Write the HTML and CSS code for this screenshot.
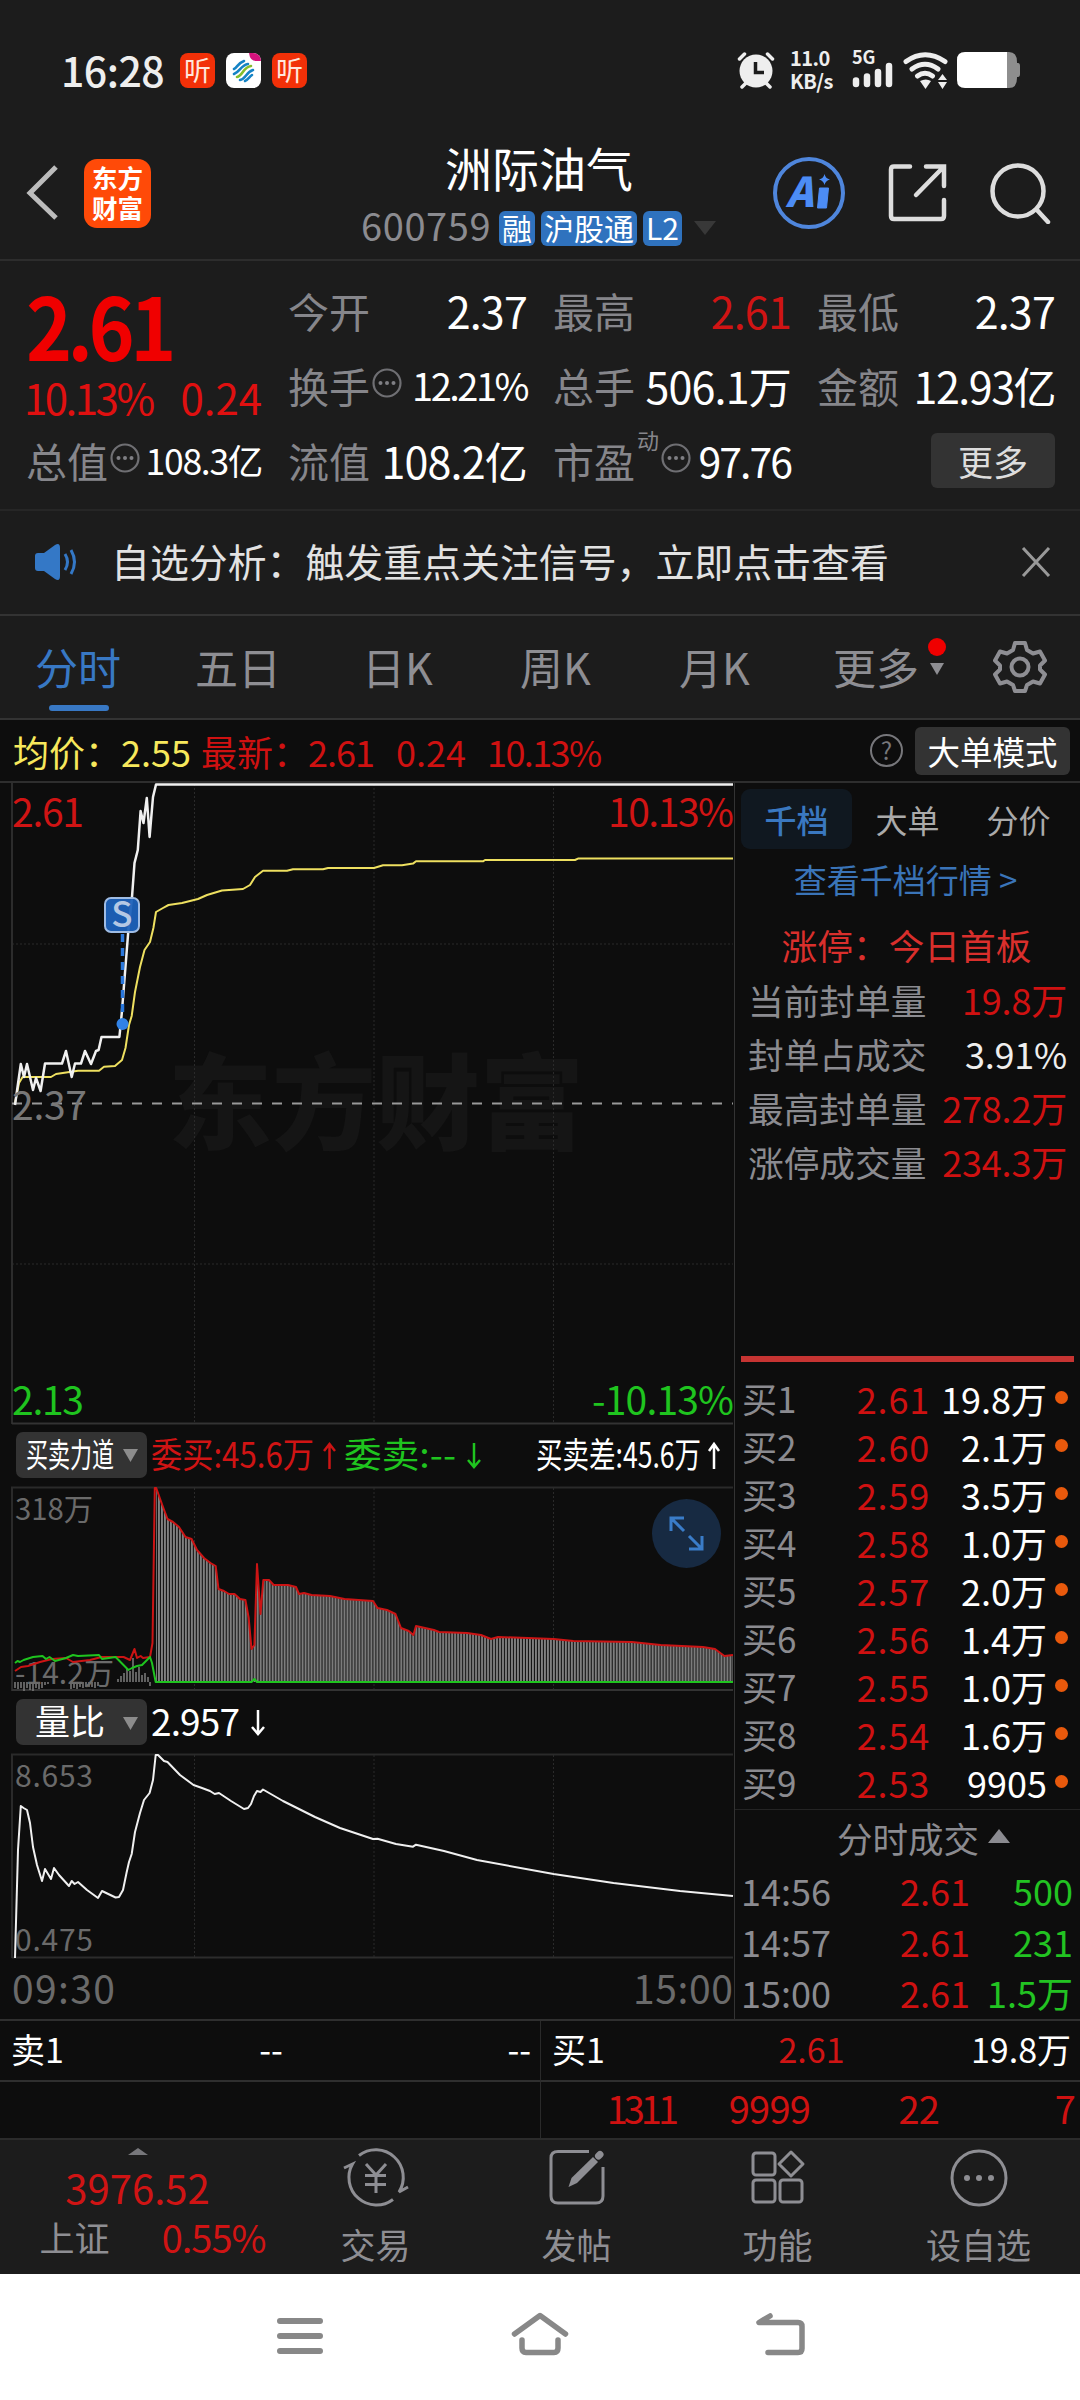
FILE: index.html
```html
<!DOCTYPE html>
<html lang="zh-CN">
<head>
    <meta charset="UTF-8">
    <meta name="viewport" content="width=device-width, initial-scale=1.0">
    <title>洲际油气 600759</title>
    <link rel="stylesheet" href="styles.css">
</head>
<body>

<div class="statusbar">
    <span class="clock">16:28</span>
    <span class="app-badge">听</span>
    <svg class="app-mobile" width="35" height="35" viewBox="0 0 35 35">
        <rect width="35" height="35" rx="8" fill="#fff"/>
        <path d="M23 0h4a8 8 0 0 1 8 8h-5q-6 0-7-8z" fill="#d5127d"/>
        <g fill="none" stroke-width="2.6" stroke-linecap="round">
            <path d="M8 16c3-1 4-6 10-8M8 21c6-2 7-9 14-10" stroke="#1583c5"/>
            <path d="M11 24c6-1 6-10 14-11" stroke="#84bd2c"/>
            <path d="M14 27c6-1 6-8 13-10M19 28c3-1 4-4 7-6" stroke="#1583c5"/>
        </g>
    </svg>
    <span class="app-badge">听</span>
    <div class="status-right">
        <svg width="38" height="38" viewBox="0 0 38 38">
            <circle cx="19" cy="20" r="16.500" fill="#eee"/>
            <path d="M2.500 8l5-5M35.500 8l-5-5M5 36l4-4M33 36l-4-4" stroke="#eee" stroke-width="3.500" stroke-linecap="round"/>
            <path d="M18.500 11v10.500h8.500" fill="none" stroke="#1c1c1c" stroke-width="3.500"/>
        </svg>
        <div class="netspeed">11.0<br>KB/s</div>
        <div class="signal">
            <span>5G</span>
            <svg width="42" height="26" viewBox="0 0 42 26" stroke="#eee" stroke-width="6.500" stroke-linecap="round">
                <path d="M4 18.500v3.500M15 14.500v7.500M26 10v12M37 4v18"/>
            </svg>
        </div>
        <svg class="wifi" width="46" height="38" viewBox="0 0 46 38">
            <g fill="none" stroke="#eee" stroke-width="5" stroke-linecap="round">
                <path d="M3 10.500Q22 -3 42 10.500M9 18Q22 8.500 35 18M14.500 25Q22 19.500 29.500 25"/>
            </g>
            <path d="M17 30q6-3 11 0l-5.500 8zM35 31h9l-4.500 7zM35 29h9l-4.500-6z" fill="#eee"/>
        </svg>
        <svg width="63" height="36" viewBox="0 0 63 36">
            <path d="M50 0h2q8 0 8 10v1h1q2 0 2 3v8q0 3-2 3h-1v1q0 10-8 10h-2z" fill="#8e8e8e"/>
            <path d="M8 0h42v36H8q-8 0-8-8V8q0-8 8-8z" fill="#fff"/>
        </svg>
    </div>
</div>

<header class="header">
    <svg class="back" width="34" height="56" viewBox="0 0 34 56">
        <path d="M31 2L5 28l26 25" fill="none" stroke="#bcbcbc" stroke-width="5"/>
    </svg>
    <div class="logo">东方<br>财富</div>
    <div class="title">
        <h1>洲际油气</h1>
        <div class="code">
            <span>600759</span>
            <b>融</b><b>沪股通</b><b>L2</b>
            <i></i>
        </div>
    </div>
    <div class="actions">
        <svg width="72" height="72" viewBox="0 0 72 72">
            <circle cx="36" cy="36" r="34" fill="none" stroke="#4f86dc" stroke-width="4"/>
            <text class="ai" x="13" y="50">A</text>
            <path d="M46.500 31h9l-2 20h-9z" fill="#4c8cf5" stroke="#4c8cf5" stroke-width="1" stroke-linejoin="round"/>
            <path d="M51.500 17q1 4.500 5.500 5.500-4.500 1-5.500 5.500-1-4.500-5.500-5.500 4.500-1 5.500-5.500z" fill="#4c8cf5"/>
        </svg>
        <svg width="60" height="60" viewBox="0 0 60 60" fill="none" stroke="#ddd" stroke-width="4.500" stroke-linecap="round">
            <path d="M23 3.500H7Q4 3.500 4 6.500V53q0 3 3 3H54q3 0 3-3V37M39 3.500H57V23M56 4.500L29 32"/>
        </svg>
        <svg width="62" height="62" viewBox="0 0 62 62" fill="none" stroke="#ddd" stroke-width="4.500">
            <circle cx="29" cy="29" r="25.500"/>
            <path d="M48 48l11 12" stroke-width="4.500" stroke-linecap="round"/>
        </svg>
    </div>
</header>

<section class="quote">
    <div class="now">
        <div class="price">2.61</div>
        <div class="change"><span class="tight">10.13%</span><span>0.24</span></div>
        <div class="cell"><label>总值</label><svg class="dots"><use href="#dots"/></svg><span class="v small">108.3亿</span></div>
    </div>
    <div class="stats">
        <div class="cell"><label>今开</label><span class="v">2.37</span></div>
        <div class="cell"><label>最高</label><span class="v red">2.61</span></div>
        <div class="cell"><label>最低</label><span class="v">2.37</span></div>
        <div class="cell"><label>换手</label><svg class="dots"><use href="#dots"/></svg><span class="v pct">12.21%</span></div>
        <div class="cell"><label>总手</label><span class="v">506.1万</span></div>
        <div class="cell"><label>金额</label><span class="v amount">12.93亿</span></div>
        <div class="cell"><label>流值</label><span class="v">108.2亿</span></div>
        <div class="cell"><label>市盈</label><sup>动</sup><svg class="dots"><use href="#dots"/></svg><span class="v pe">97.76</span></div>
        <div class="cell"><button class="more">更多</button></div>
    </div>
</section>

<section class="notice">
    <svg width="46" height="38" viewBox="0 0 46 38">
        <path d="M2 13q0-3 3-3h6L22 2q5-3 5 3v28q0 6-5 3l-11-8H5q-3 0-3-3z" fill="#3478c6"/>
        <path d="M32 11q5 8 0 16M38 7q7 12 0 24" fill="none" stroke="#3478c6" stroke-width="3"/>
    </svg>
    <p>自选分析：触发重点关注信号，立即点击查看</p>
    <svg width="30" height="30" viewBox="0 0 30 30"><path d="M2 1l26 28M28 1L2 29" stroke="#999" stroke-width="3"/></svg>
</section>

<nav class="tabs">
    <a class="active">分时</a>
    <a>五日</a>
    <a>日K</a>
    <a>周K</a>
    <a>月K</a>
    <a class="tab-more">更多</a>
    <svg width="54" height="54" viewBox="0 0 54 54" fill="none" stroke="#8e8e93" stroke-width="4">
        <path stroke-linejoin="round" d="M22 3h10l2 7 6 3.500 7-2 5 9-5 5v4l5 5-5 9-7-2-6 3.500-2 6H22l-2-6-6-3.500-7 2-5-9 5-5v-4l-5-5 5-9 7 2L20 10z"/>
        <circle cx="27" cy="27" r="8.500"/>
    </svg>
</nav>

<div class="infobar">
    <span class="avg">均价：2.55</span>
    <span class="last">最新：</span>
    <span class="last n1">2.61</span>
    <span class="last n2">0.24</span>
    <span class="last n3">10.13%</span>
    <span class="help">?</span>
    <span class="mode">大单模式</span>
</div>

<main class="main">
    <div class="charts">
        <!-- price -->
        <svg class="chart" width="734" height="641" viewBox="0 783 734 641">
            <text class="watermark" x="168" y="1142" textLength="416">东方财富</text>
            <g class="grid">
                <path d="M12 944H733M12 1264H733M194.500 784V1424M374 784V1424M553.500 784V1424"/>
            </g>
            <path d="M12 783V1424" stroke="#2c2c2c" stroke-width="2"/>
            <path d="M12 1423.500H733" stroke="#333" stroke-width="2"/>
            <path d="M12 1103.500H733" stroke="#999" stroke-width="2" stroke-dasharray="10 10"/>
            <polyline class="line yellow" points="15,1103 19,1083 22.600,1077 51,1077 56,1074 78,1070.700 99,1070.700 104,1066.700 115,1066 122,1060 125.500,1048 129,1025 131.700,1016 135,992 140,967 144.500,950 150,942 153.400,928 156,912 163,908 168.500,905 182,903 198,899 207,895 222,890.500 243,889 250,885 255,877 263,870.700 287,870.700 293,869.300 323,869.300 328,868 374,868 383,865.300 402,865.300 413,863.600 416,861.300 483,861.300 485,860 575,860 578,858.600 733,858.600"/>
            <polyline class="line white" points="15,1105 20.800,1064 24,1077 27,1064 33,1090 36,1078 40.600,1091 45,1063.500 62,1063.500 66,1051 71.700,1077 75,1063.500 81,1063.500 85,1051 91,1064 96,1051 98.600,1050 101.500,1037 119.400,1037 121.800,1013 128.400,930 132,897 134.500,863 137.800,850 140.600,811 143.500,823 146.800,798 149.600,837 153,797 156,784.500 733,784.500"/>
            <path d="M122.500 934V1018" stroke="#2b78dc" stroke-width="3.500" stroke-dasharray="8 6"/>
            <circle cx="122.500" cy="1024" r="6" fill="#3182e6"/>
            <rect x="105" y="898" width="34" height="34" rx="6" fill="#1e62ba" fill-opacity=".95" stroke="#9fbce4" stroke-width="2"/>
            <text class="mark" x="122" y="927">S</text>
            <text class="scale red" x="12" y="827" textLength="72">2.61</text>
            <text class="scale red" x="608" y="827" textLength="126">10.13%</text>
            <text class="scale gray" x="12" y="1120" textLength="75">2.37</text>
            <text class="scale green" x="12" y="1415" textLength="72">2.13</text>
            <text class="scale green" x="592" y="1415" textLength="142">-10.13%</text>
        </svg>

        <svg class="chart-head" width="734" height="63" viewBox="0 1424 734 63">
            <rect x="16" y="1432" width="131" height="46" rx="7" fill="#333"/>
            <text x="26" y="1467" font-size="33" textLength="88" lengthAdjust="spacingAndGlyphs" fill="#fff">买卖力道</text>
            <path d="M123 1449h15l-7.500 13z" fill="#8c8c8c"/>
            <g class="head-text">
                <text class="red" x="151" y="1468" textLength="163" lengthAdjust="spacingAndGlyphs">委买:45.6万</text>
                <text class="green" x="344" y="1468" textLength="112" lengthAdjust="spacingAndGlyphs">委卖:--</text>
                <text x="536" y="1468" textLength="165" lengthAdjust="spacingAndGlyphs">买卖差:45.6万</text>
            </g>
            <g fill="none" stroke-width="2.500">
                <path class="s-red" d="M329.500 1469v-24M324 1451l5.500-7 5.500 7"/>
                <path class="s-green" d="M474 1443v24M468 1460l6 7 6-7"/>
                <path stroke="#fff" d="M714 1469v-24M709 1451l5-7 5 7"/>
            </g>
        </svg>

        <!-- buy / sell strength -->
        <svg class="chart" width="734" height="204" viewBox="0 1487 734 204">
            <defs>
                <pattern id="bars" x="155" y="0" width="2.992" height="10" patternUnits="userSpaceOnUse">
                    <rect width="3" height="10" fill="#141414"/>
                    <rect width="1.900" height="10" fill="#808080"/>
                </pattern>
            </defs>
            <g class="grid"><path d="M194.500 1488V1691M374 1488V1691M553.500 1488V1691"/></g>
            <path d="M12 1691V1487.500H733" fill="none" stroke="#2a2a2a" stroke-width="2"/>
            <path d="M12 1690H733" stroke="#333" stroke-width="2"/>
            <polygon fill="url(#bars)" points="156,1682 156.200,1488 163,1507 167.500,1519 173,1522 179,1527 185.500,1537 191.600,1539 197,1550 204,1558 210.500,1563 215.700,1566 218.500,1589 224,1591 229,1594 234.500,1594 240,1599 245.400,1600 248.700,1618 251.500,1649 254.400,1645 257,1564 260.500,1614 263.300,1580 269,1580 273.700,1585 288,1585 296,1587 299,1594 304,1593 311.500,1595 330,1596 344.500,1599 373,1601 377.500,1608 387,1610 395.500,1614 401,1628 408.700,1631 413.400,1635 416,1626 434,1630 439,1632 467,1633 481,1635 491,1639 498,1637 553.600,1639 573.400,1641 632,1642 651,1644 660.700,1645 703,1647 715,1649 724.400,1656 733,1655 733,1682"/>
            <path stroke="#777" stroke-width="1.600" d="M15 1682v6M18 1682v7M21 1682v6M24 1682v9M27 1682v6M30 1682v8M33 1682v9M36 1682v6M39 1682v7M42 1682v6M45 1682v3M48 1682v2M71 1682v7M74 1682v6M77 1682v7M80 1682v5M83 1682v6M86 1682v5M89 1682v5M92 1682v5M95 1682v6M98 1682v4M118 1682v-3M121 1682v-6M124 1682v-9M127 1682v-13M130 1682v-11M133 1682v-24M136 1682v-10M139 1682v-15M142 1682v-7M145 1682v-9M148 1682v-5M150 1682v4"/>
            <text class="note" x="15" y="1520" textLength="78" lengthAdjust="spacingAndGlyphs">318万</text>
            <text class="note" x="15" y="1684" textLength="99" lengthAdjust="spacingAndGlyphs">-14.2万</text>
            <polyline class="thin s-red" points="15,1671 21,1667 28,1666 40,1662 52,1659 66,1658 73,1662 90,1660 101.500,1657 123.600,1657 130,1660 134.500,1649 137,1658 140.600,1656 143,1658 150,1657 152.500,1643 154.800,1488 156.200,1488 163,1507 167.500,1519 173,1522 179,1527 185.500,1537 191.600,1539 197,1550 204,1558 210.500,1563 215.700,1566 218.500,1589 224,1591 229,1594 234.500,1594 240,1599 245.400,1600 248.700,1618 251.500,1649 254.400,1645 257,1564 260.500,1614 263.300,1580 269,1580 273.700,1585 288,1585 296,1587 299,1594 304,1593 311.500,1595 330,1596 344.500,1599 373,1601 377.500,1608 387,1610 395.500,1614 401,1628 408.700,1631 413.400,1635 416,1626 434,1630 439,1632 467,1633 481,1635 491,1639 498,1637 553.600,1639 573.400,1641 632,1642 651,1644 660.700,1645 703,1647 715,1649 724.400,1656 733,1655"/>
            <polyline class="thin s-green" points="15,1663 17.500,1661 20,1662 23.600,1660 33,1657 42.500,1656 46,1659 49.500,1657 55,1661 66,1658 73,1655 78,1656 99,1655 102,1659 115.600,1657 128.400,1670 132,1668 137,1666 142,1665 146,1661 150,1657 152,1663 155.700,1682 251.500,1682 254.400,1679 257,1682 733,1682"/>
            <circle cx="686.500" cy="1533.500" r="34.500" fill="#172a42"/>
            <path d="M671 1531v-13h13M672 1519l12 12M702 1536v13h-13M701 1548l-12-12" fill="none" stroke="#3a7cc8" stroke-width="3"/>
        </svg>

        <svg class="chart-head" width="734" height="63" viewBox="0 1691 734 63">
            <rect x="16" y="1699" width="131" height="46" rx="7" fill="#333"/>
            <text x="35" y="1735" font-size="35" textLength="70" fill="#fff">量比</text>
            <path d="M123 1717h15l-7.500 13z" fill="#8c8c8c"/>
            <text x="151" y="1736" font-size="37" textLength="89" fill="#fff">2.957</text>
            <path stroke="#fff" fill="none" stroke-width="2.500" d="M258 1710v24M252 1727l6 7 6-7"/>
        </svg>

        <!-- volume ratio -->
        <svg class="chart" width="734" height="265" viewBox="0 1754 734 265">
            <g class="grid"><path d="M194.500 1755V1957M374 1755V1957M553.500 1755V1957"/></g>
            <path d="M12 1958V1754.500H733" fill="none" stroke="#2a2a2a" stroke-width="2"/>
            <path d="M12 1957.500H733" stroke="#2c2c2c" stroke-width="2"/>
            <text class="note" x="15" y="1787" textLength="78">8.653</text>
            <text class="note" x="15" y="1951" textLength="78">0.475</text>
            <polyline class="thin white" points="15,1958 18,1850 20.800,1806 23.600,1808 27,1810 30,1823 33,1847 37,1865 42,1881 45,1869 51,1879 54,1868 59,1875 69,1886 71.700,1881 74.600,1884 78,1882 87,1890 98,1898 102,1891 115.600,1897.500 119,1897 123,1890 126.500,1873 129,1862 131.700,1854 135,1832 140,1813 144,1800 149.600,1793 153,1780 155.700,1755 158,1755 164,1761 167.500,1762 180,1775 193.500,1785 202,1788 210,1791 214.700,1794 219,1793 231,1801 244,1809 248,1808 251,1804 254,1796 257,1791 260.500,1792 263,1789.500 283,1801 315,1817 340,1828 373,1839 377.500,1838.700 396,1844 413,1846.700 416,1844.700 444,1851 477,1860 553.600,1874 613.500,1883 680,1891 733,1896"/>
            <text class="scale axis" x="12" y="2004" textLength="103">09:30</text>
            <text class="scale axis" x="633" y="2004" textLength="100">15:00</text>
        </svg>
    </div>

    <aside class="book">
        <div class="book-tabs"><a class="on">千档</a><a>大单</a><a>分价</a></div>
        <a class="link">查看千档行情 &gt;</a>
        <div class="limit">涨停：今日首板</div>
        <div class="seal"><span>当前封单量</span><em class="red">19.8万</em></div>
        <div class="seal"><span>封单占成交</span><em>3.91%</em></div>
        <div class="seal"><span>最高封单量</span><em class="red">278.2万</em></div>
        <div class="seal"><span>涨停成交量</span><em class="red">234.3万</em></div>
        <hr>
        <div class="level"><span>买1</span><b>2.61</b><em>19.8万</em><i></i></div>
        <div class="level"><span>买2</span><b>2.60</b><em>2.1万</em><i></i></div>
        <div class="level"><span>买3</span><b>2.59</b><em>3.5万</em><i></i></div>
        <div class="level"><span>买4</span><b>2.58</b><em>1.0万</em><i></i></div>
        <div class="level"><span>买5</span><b>2.57</b><em>2.0万</em><i></i></div>
        <div class="level"><span>买6</span><b>2.56</b><em>1.4万</em><i></i></div>
        <div class="level"><span>买7</span><b>2.55</b><em>1.0万</em><i></i></div>
        <div class="level"><span>买8</span><b>2.54</b><em>1.6万</em><i></i></div>
        <div class="level"><span>买9</span><b>2.53</b><em>9905</em><i></i></div>
        <div class="ticks-title">分时成交<i></i></div>
        <div class="tick"><span>14:56</span><b>2.61</b><em>500</em></div>
        <div class="tick"><span>14:57</span><b>2.61</b><em>231</em></div>
        <div class="tick"><span>15:00</span><b>2.61</b><em>1.5万</em></div>
    </aside>
</main>

<section class="depth">
    <div class="side sell"><span>卖1</span><b>--</b><em>--</em></div>
    <div class="side buy"><span>买1</span><b class="red">2.61</b><em>19.8万</em></div>
    <div class="queue"></div>
    <div class="queue"><span class="ones">1311</span><span>9999</span><span>22</span><span>7</span></div>
</section>

<footer class="toolbar">
    <div class="index">
        <i></i>
        <strong>3976.52</strong>
        <div><span>上证</span><em>0.55%</em></div>
    </div>
    <div class="tool">
        <svg width="66" height="62" viewBox="0 0 66 62" fill="none" stroke="#8e8e93" stroke-width="3">
            <path d="M16 8.500A27.500 27.500 0 0 1 56 45l9-5"/>
            <path d="M50 52.500A27.500 27.500 0 0 1 9.500 17l-8.500 4"/>
            <path d="M23 17l10 11 10-11M33 28v18M22 28.500h21M22 37.500h21"/>
        </svg>
        <span>交易</span>
    </div>
    <div class="tool">
        <svg width="60" height="62" viewBox="0 0 60 62" fill="none" stroke="#8e8e93" stroke-width="3">
            <path d="M42 4.500H11Q4 4.500 4 11v38q0 7 7 7h38q7 0 7-7V20"/>
            <path d="M21.500 40l3-9L46 10l5 5-21 21z" fill="#8e8e93" stroke="none"/>
            <path d="M51.500 9l1.500-1.500" stroke-width="7" stroke-linecap="round"/>
        </svg>
        <span>发帖</span>
    </div>
    <div class="tool">
        <svg width="60" height="62" viewBox="0 0 60 62" fill="none" stroke="#8e8e93" stroke-width="3">
            <rect x="5" y="6" width="22" height="22" rx="3"/>
            <rect x="5" y="33" width="22" height="22" rx="3"/>
            <rect x="32" y="33" width="22" height="22" rx="3"/>
            <path stroke-linejoin="round" d="M43 5l12 12-12 12-12-12z"/>
        </svg>
        <span>功能</span>
    </div>
    <div class="tool">
        <svg width="60" height="62" viewBox="0 0 60 62">
            <circle cx="30" cy="31" r="27" fill="none" stroke="#8e8e93" stroke-width="3"/>
            <g fill="#8e8e93"><circle cx="18" cy="31" r="3"/><circle cx="30" cy="31" r="3"/><circle cx="42" cy="31" r="3"/></g>
        </svg>
        <span>设自选</span>
    </div>
</footer>

<div class="sysnav">
    <svg width="48" height="48" viewBox="0 0 48 48"><path d="M4 10h40M4 25h40M4 40h40" stroke="#888" stroke-width="6" stroke-linecap="round"/></svg>
    <svg width="60" height="48" viewBox="0 0 60 48" fill="none" stroke="#888" stroke-width="5.500" stroke-linejoin="round" stroke-linecap="round"><path d="M4.500 23L30 4.500l25.500 18.500M12 29v8q0 4.500 4 4.500h28q4 0 4-4.500V29"/></svg>
    <svg width="52" height="48" viewBox="0 0 52 48" fill="none" stroke="#888" stroke-width="5.500" stroke-linecap="round" stroke-linejoin="round"><path d="M15 5L4 11.500h39q4 0 4 4V37.500q0 4-4 4H13"/></svg>
</div>

<svg width="0" height="0" class="defs">
    <symbol id="dots" viewBox="0 0 30 30">
        <circle cx="15" cy="15" r="13.500" fill="none" stroke="#6f6f73" stroke-width="2.200"/>
        <g fill="#7f7f84"><circle cx="8.500" cy="15" r="2"/><circle cx="15" cy="15" r="2"/><circle cx="21.500" cy="15" r="2"/></g>
    </symbol>
</svg>

</body>
</html>
```
FILE: styles.css
```css
* {
    box-sizing: border-box;
}
body {
    margin: 0;
    width: 1080px;
    height: 2400px;
    overflow: hidden;
    background: #1c1c1c;
    color: #fff;
    font-family: "Noto Sans CJK SC", "Noto Sans", sans-serif;
}
svg {
    display: block;
    flex: none;
}
i, em {
    font-style: normal;
}
.defs {
    position: absolute;
}
.red {
    color: #d01414;
    fill: #d01414;
}
.green {
    fill: #1fc41f;
}
.s-red {
    stroke: #cc1414;
}
.s-green {
    stroke: #1fc41f;
}

/* status bar */
.statusbar {
    height: 140px;
    padding: 0 60px 0 61px;
    display: flex;
    align-items: center;
}
.clock {
    width: 119px;
    padding-bottom: 3px;
    font-size: 41px;
    font-weight: 500;
    letter-spacing: -0.500px;
    color: #eee;
    line-height: 60px;
}
.app-badge {
    width: 35px;
    height: 35px;
    border-radius: 8px;
    background: #f23008;
    font-size: 27px;
    line-height: 33px;
    text-align: center;
    color: #ffe6dd;
}
.app-mobile {
    margin: 0 11px;
}
.status-right {
    margin-left: auto;
    display: flex;
    align-items: center;
    color: #eee;
}
.netspeed {
    width: 62px;
    margin: -3px 0 0 15px;
    font-size: 20px;
    font-weight: 700;
    letter-spacing: -0.500px;
    line-height: 23px;
}
.signal {
    width: 42px;
    margin-right: 9px;
    margin-top: -3px;
    font-size: 18px;
    font-weight: 700;
}
.signal span {
    display: block;
    height: 13px;
    line-height: 15px;
}
.wifi {
    margin-right: 8px;
}

/* header */
.header {
    height: 121px;
    border-bottom: 2px solid #2d2d2d;
    padding: 0 27px 0 25px;
    display: flex;
    align-items: flex-start;
}
.back {
    margin-top: 25px;
}
.logo {
    width: 67px;
    height: 69px;
    margin: 19px 0 0 25px;
    padding-top: 3px;
    border-radius: 13px;
    background: #ff4a08;
    font-size: 25.500px;
    line-height: 30px;
    font-weight: 700;
    text-align: center;
}
.title {
    margin-left: 210px;
    width: 360px;
}
.title h1 {
    margin: -3px 0 0 84px;
    font-size: 47px;
    font-weight: 400;
    line-height: 60px;
}
.code {
    height: 36px;
    margin-top: 13px;
    display: flex;
    align-items: center;
    color: #8b8b90;
    font-size: 38px;
}
.code span {
    width: 138px;
    padding-bottom: 6px;
    letter-spacing: 0.600px;
    line-height: 36px;
}
.code b {
    height: 35px;
    margin-right: 6px;
    padding: 0 3px;
    border-radius: 6px;
    background: #2f72be;
    color: #fff;
    font-size: 30px;
    font-weight: 400;
    line-height: 32px;
}
.code i {
    margin-left: 6px;
    border: 11px solid transparent;
    border-top: 14px solid #383838;
    border-bottom: 0;
}
.actions {
    margin: 17px 0 0 52px;
    display: flex;
    align-items: center;
    gap: 42px;
}
.ai {
    font: italic 900 41px "Noto Sans CJK SC", sans-serif;
    fill: #4c8cf5;
}

/* quote */
.quote {
    height: 250px;
    border-bottom: 2px solid #262626;
    display: flex;
    padding: 11px 25px 0 26px;
}
.now {
    width: 237px;
}
.price {
    height: 103px;
    font-size: 86px;
    line-height: 104px;
    font-weight: 700;
    letter-spacing: -5px;
    color: #f00000;
    transform: scaleX(0.910);
    transform-origin: left;
}
.change {
    height: 47px;
    display: flex;
    justify-content: space-between;
    font-size: 42px;
    line-height: 44px;
    color: #e01010;
}
.change .tight {
    margin-left: -2px;
    letter-spacing: -2.500px;
}
.stats {
    width: 767px;
    margin-left: 26px;
    display: grid;
    grid-template-columns: 239px 238px 238px;
    grid-auto-rows: 75px;
    column-gap: 26px;
}
.cell {
    height: 75px;
    display: flex;
    align-items: center;
    white-space: nowrap;
}
.cell label {
    font-size: 41px;
    color: #86868b;
}
.cell .v {
    margin-left: auto;
    font-size: 43px;
    letter-spacing: -0.800px;
}
.cell .small {
    font-size: 35.500px;
    letter-spacing: -1.300px;
}
.cell .pct {
    font-size: 38px;
    letter-spacing: -2.500px;
}
.cell .amount {
    letter-spacing: -1.500px;
}
.cell .pe {
    font-size: 41px;
    letter-spacing: -2px;
}
.cell sup {
    align-self: flex-start;
    font-size: 22px;
    line-height: 34px;
    margin-left: 2px;
    color: #86868b;
}
.dots {
    width: 30px;
    height: 30px;
    margin: 0 0 4px 2px;
}
.more {
    width: 124px;
    height: 55px;
    margin: 2px 0 0 auto;
    border: 0;
    border-radius: 6px;
    background: #333;
    color: #ddd;
    font: 35px/50px "Noto Sans CJK SC", sans-serif;
}

/* notice */
.notice {
    height: 105px;
    padding: 0 29px 2px 33px;
    border-bottom: 2px solid #333;
    display: flex;
    align-items: center;
}
.notice p {
    margin: -3px auto 0 32px;
    font-size: 38.900px;
    color: #e2e2e2;
}

/* tabs */
.tabs {
    height: 104px;
    padding: 0 34px 0 35px;
    border-bottom: 2px solid #333;
    display: grid;
    grid-template-columns: 160px 167px 158px 159px 154px 160px 54px;
    align-items: center;
    font-size: 43px;
    color: #8e8e93;
}
.tabs a {
    line-height: 100px;
    height: 102px;
    position: relative;
}
.tabs .active {
    color: #3878c4;
}
.tabs .active::after {
    content: "";
    position: absolute;
    left: 14px;
    bottom: 7px;
    width: 60px;
    height: 6px;
    border-radius: 3px;
    background: #3878c4;
}
.tab-more::before {
    content: "";
    position: absolute;
    left: 95px;
    top: 22px;
    width: 18px;
    height: 18px;
    border-radius: 50%;
    background: #f00000;
}
.tab-more::after {
    content: "";
    position: absolute;
    left: 97px;
    top: 47px;
    border: 7px solid transparent;
    border-top: 12px solid #8e8e93;
    border-bottom: 0;
}

/* average / last price strip */
.infobar {
    height: 63px;
    padding: 0 10px 0 13px;
    border-bottom: 2px solid #2e2e2e;
    background: #0d0d0d;
    display: flex;
    align-items: center;
    font-size: 36px;
    line-height: 60px;
}
.avg {
    width: 188px;
    color: #f7e85c;
}
.last {
    color: #cf1111;
}
.n1 {
    letter-spacing: -1px;
    margin-left: -1px;
    width: 88px;
}
.n2 {
    width: 91px;
}
.n3 {
    letter-spacing: -1.600px;
}
.help {
    width: 33px;
    height: 33px;
    margin-left: auto;
    border: 2.500px solid #77777b;
    border-radius: 50%;
    color: #77777b;
    font-size: 24px;
    line-height: 28px;
    text-align: center;
}
.mode {
    width: 155px;
    height: 48px;
    margin-left: 12px;
    border-radius: 6px;
    background: #333;
    font-size: 32.500px;
    line-height: 47px;
    text-align: center;
}

/* charts */
.main {
    height: 1236px;
    display: flex;
    background: #0d0d0d;
}
.charts {
    width: 735px;
    border-right: 1px solid #333;
}
.chart, .chart-head {
    overflow: visible;
}
.grid path {
    stroke: #2a2a2a;
    stroke-width: 1;
    stroke-dasharray: 2 2;
}
.line, .thin {
    fill: none;
    stroke-width: 2.500;
    stroke-linejoin: round;
}
.thin {
    stroke-width: 2;
}
.yellow {
    stroke: #eee060;
    stroke-width: 2;
}
.white {
    stroke: #f0f0f0;
}
.scale {
    font-size: 39px;
}
.note {
    font-size: 30px;
}
.note, .axis {
    fill: #6a6a6a;
}
.gray {
    fill: #777;
}
.head-text {
    font-size: 35px;
    fill: #fff;
}
.watermark {
    font-size: 104px;
    font-weight: 900;
    fill: #151515;
}
.mark {
    font-size: 35px;
    font-weight: 500;
    text-anchor: middle;
    fill: #b4c8e4;
}

/* order book */
.book {
    width: 345px;
    padding: 6px 0 0 6px;
}
.book-tabs {
    display: flex;
    height: 60px;
}
.book-tabs a {
    width: 111px;
    font-size: 32px;
    line-height: 60px;
    text-align: center;
    color: #aaa;
}
.book-tabs .on {
    border-radius: 9px;
    background: #101820;
    color: #3a78c0;
    font-weight: 500;
}
.link {
    display: block;
    height: 60px;
    padding-right: 10px;
    font-size: 33px;
    line-height: 61px;
    text-align: center;
    color: #3a74b8;
    white-space: nowrap;
}
.limit {
    height: 63px;
    padding-right: 8px;
    font-size: 35.700px;
    line-height: 71px;
    text-align: center;
    color: #d92f2c;
}
.seal {
    height: 54px;
    padding: 0 13px 0 7px;
    display: flex;
    justify-content: space-between;
    align-items: center;
    font-size: 35.700px;
    color: #8b8b90;
}
.seal em {
    font-size: 36px;
    letter-spacing: -0.200px;
    color: #eee;
}
.seal em.red {
    color: #cf1111;
}
.book hr {
    width: 333px;
    height: 6px;
    margin: 168px 0 12px 0;
    border: 0;
    background: #c63432;
}
.level {
    height: 48px;
    padding: 0 13px 0 1px;
    display: grid;
    grid-template-columns: 60px 128px 117px 13px;
    align-items: center;
    font-size: 35px;
    line-height: 48px;
    color: #8b8b90;
}
.level b, .tick b {
    font-weight: 400;
    text-align: right;
    color: #cf1111;
}
.level b {
    font-size: 36px;
    letter-spacing: 0.800px;
}
.level em, .tick em {
    text-align: right;
    color: #fff;
    white-space: nowrap;
}
.level em {
    font-size: 36px;
}
.level i {
    width: 13px;
    height: 13px;
    margin: 0 0 2px 8px;
    border-radius: 50%;
    background: #e8590c;
}
.ticks-title {
    margin: 3px 0 0 -6px;
    height: 56px;
    border-top: 1px solid #242424;
    display: flex;
    justify-content: center;
    align-items: center;
    gap: 9px;
    padding-left: 32px;
    font-size: 35.500px;
    line-height: 54px;
    color: #8b8b90;
}
.ticks-title i {
    margin-bottom: 3px;
    border: 11px solid transparent;
    border-bottom: 14px solid #8b8b90;
    border-top: 0;
}
.tick {
    height: 51px;
    padding: 0 7px 0 0;
    display: grid;
    grid-template-columns: 100px 129px 103px;
    font-size: 36px;
    line-height: 51px;
    color: #8b8b90;
}
.tick em {
    color: #22c322;
}

/* best bid / ask */
.depth {
    height: 119px;
    display: grid;
    grid-template-columns: 540px 540px;
    grid-template-rows: 61px 56px;
    background: #0d0d0d;
    border-top: 2px solid #2f2f2f;
    font-size: 34px;
}
.side {
    display: grid;
    grid-template-columns: 1fr 1fr 1fr;
    align-items: center;
    padding: 0 9px 4px 11px;
    border-bottom: 2px solid #2f2f2f;
    line-height: 54px;
}
.side b {
    font-weight: 400;
    text-align: center;
}
.side em {
    text-align: right;
}
.buy, .queue + .queue {
    border-left: 1px solid #2a2a2a;
}
.queue {
    display: grid;
    grid-template-columns: 134px 135px 129px 136px;
    align-items: center;
    text-align: right;
    color: #cf1111;
    font-size: 38px;
    line-height: 50px;
    padding-bottom: 4px;
}
.queue span {
    letter-spacing: -0.800px;
}
.queue .ones {
    letter-spacing: -4px;
}

/* toolbar */
.toolbar {
    height: 136px;
    border-top: 2px solid #2b2b2b;
    display: flex;
    background: #1c1c1c;
    color: #8e8e93;
}
.index {
    width: 275px;
    display: flex;
    flex-direction: column;
    align-items: center;
    padding-top: 8px;
}
.index i {
    border: 10px solid transparent;
    border-bottom: 7px solid #77777b;
    border-top: 0;
}
.index strong {
    margin-top: 4px;
    font-size: 40px;
    font-weight: 400;
    line-height: 56px;
    color: #d01414;
}
.index div {
    width: 226px;
    margin-left: 30px;
    display: flex;
    justify-content: space-between;
    align-items: center;
    font-size: 35px;
    line-height: 44px;
}
.index em {
    font-size: 38px;
    letter-spacing: -1px;
    color: #d01414;
}
.tool {
    width: 201px;
    padding-top: 7px;
    display: flex;
    flex-direction: column;
    align-items: center;
    font-size: 35px;
    line-height: 44px;
}
.tool span {
    margin-top: 13px;
}

/* system navigation */
.sysnav {
    height: 126px;
    background: #fff;
    display: flex;
    align-items: flex-start;
    padding: 37px 273px 0 276px;
    justify-content: space-between;
}
```
